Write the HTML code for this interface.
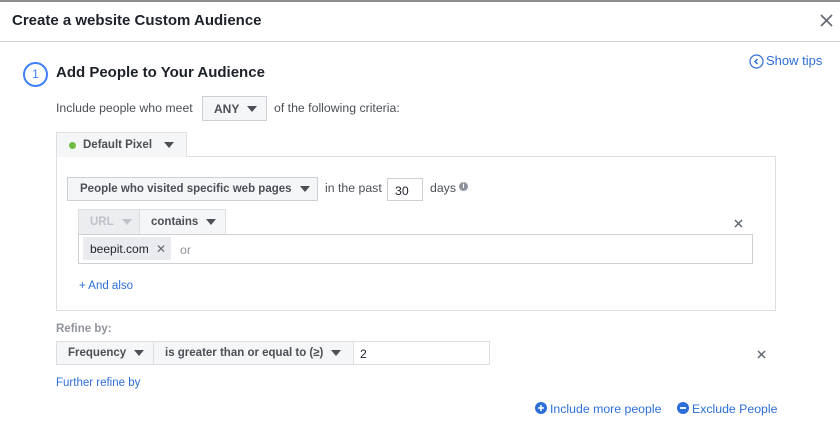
<!DOCTYPE html>
<html><head><style>
*{margin:0;padding:0;box-sizing:border-box}
body{width:840px;height:428px;background:#fff;font-family:"Liberation Sans",sans-serif;color:#1d2129;position:relative;overflow:hidden;font-size:12.3px}
.a{position:absolute;white-space:nowrap}
.btn{position:absolute;background:#f5f6f7;border:1px solid #ccd0d5;font-weight:bold;color:#4b4f56;font-size:11.5px;display:flex;align-items:center}
.tri{display:inline-block;width:0;height:0;border-left:5px solid transparent;border-right:5px solid transparent;border-top:6px solid #4b4f56;margin-left:8px}
.blue{color:#2d6fd8}
</style></head><body>
<div class="a" style="left:0;top:0;width:840px;height:2px;background:#8d8d8d"></div>
<div class="a" style="left:12px;top:12px;font-size:15px;font-weight:bold">Create a website Custom Audience</div>
<svg class="a" style="left:820px;top:14px" width="13" height="13"><path d="M1 1L12 12M12 1L1 12" stroke="#606770" stroke-width="1.6"/></svg>
<div class="a" style="left:0;top:41px;width:840px;height:1px;background:#d3d5d8"></div>

<div class="a" style="left:23px;top:62px;width:25px;height:25px;border:2px solid #4080ff;border-radius:50%;color:#4080ff;font-size:12px;text-align:center;line-height:21px">1</div>
<div class="a" style="left:56px;top:64px;font-size:15px;font-weight:bold">Add People to Your Audience</div>
<svg class="a" style="left:749px;top:54px" width="15" height="15"><circle cx="7.5" cy="7.5" r="6.5" fill="none" stroke="#2d6fd8" stroke-width="1.2"/><path d="M8.5 5L6 7.5L8.5 10" fill="none" stroke="#2d6fd8" stroke-width="1.5"/></svg>
<div class="a blue" style="left:766px;top:53px;font-size:13px">Show tips</div>

<div class="a" style="left:56px;top:101px;color:#4b4f56">Include people who meet</div>
<div class="btn" style="left:202px;top:96px;width:65px;height:25px;padding-left:11px;font-size:12px">ANY<span class="tri"></span></div>
<div class="a" style="left:274px;top:101px;color:#4b4f56">of the following criteria:</div>

<div class="a" style="left:56px;top:156px;width:720px;height:155px;border:1px solid #dddfe2"></div>
<div class="btn" style="left:56px;top:132px;width:131px;height:25px;padding-left:12px;border-bottom:none;border-color:#dddfe2"><span style="width:7px;height:7px;border-radius:50%;background:#6fbe44;margin-right:7px"></span>Default Pixel<span class="tri" style="margin-left:12px"></span></div>

<div class="btn" style="left:67px;top:177px;width:251px;height:24px;padding-left:12px">People who visited specific web pages<span class="tri"></span></div>
<div class="a" style="left:325px;top:181px;color:#4b4f56">in the past</div>
<div class="a" style="left:387px;top:178px;width:36px;height:23px;border:1px solid #ccd0d5;padding:5px 7px">30</div>
<div class="a" style="left:430px;top:181px;color:#4b4f56">days</div>
<div class="a" style="left:459px;top:182px;width:9px;height:9px;border-radius:50%;background:#8d949e;color:#fff;font-size:7px;text-align:center;line-height:9px;font-weight:bold">i</div>

<div class="btn" style="left:78px;top:209px;width:62px;height:26px;padding-left:11px;background:#ebedf0;color:#bec3c9;border-color:#dddfe2">URL<span class="tri" style="border-top-color:#bec3c9"></span></div>
<div class="btn" style="left:139px;top:209px;width:87px;height:26px;padding-left:11px;border-color:#dddfe2">contains<span class="tri"></span></div>
<div class="a" style="left:78px;top:234px;width:675px;height:30px;border:1px solid #ccd0d5"></div>
<div class="a" style="left:83px;top:237px;width:88px;height:23px;background:#e9ebee;padding:5px 7px;font-size:12px">beepit.com <span style="color:#606770;margin-left:4px">✕</span></div>
<div class="a" style="left:180px;top:243px;color:#90949c">or</div>
<svg class="a" style="left:734px;top:219px" width="9" height="9"><path d="M1 1L8 8M8 1L1 8" stroke="#606770" stroke-width="1.5"/></svg>
<div class="a blue" style="left:79px;top:280px;font-size:11.5px">+ And also</div>

<div class="a" style="left:56px;top:323px;color:#90949c;font-weight:bold;font-size:11.5px">Refine by:</div>
<div class="btn" style="left:56px;top:341px;width:98px;height:24px;padding-left:11px;border-color:#dddfe2">Frequency<span class="tri"></span></div>
<div class="btn" style="left:153px;top:341px;width:201px;height:24px;padding-left:11px;border-color:#dddfe2">is greater than or equal to (≥)<span class="tri"></span></div>
<div class="a" style="left:353px;top:341px;width:137px;height:24px;border:1px solid #dddfe2;padding:5px 6px">2</div>
<svg class="a" style="left:757px;top:350px" width="9" height="9"><path d="M1 1L8 8M8 1L1 8" stroke="#606770" stroke-width="1.5"/></svg>
<div class="a blue" style="left:56px;top:377px;font-size:11.5px">Further refine by</div>

<svg class="a" style="left:535px;top:402px" width="12" height="12"><circle cx="6" cy="6" r="6" fill="#2d6fd8"/><path d="M6 3V9M3 6H9" stroke="#fff" stroke-width="1.6"/></svg>
<div class="a blue" style="left:550px;top:402px">Include more people</div>
<svg class="a" style="left:677px;top:402px" width="12" height="12"><circle cx="6" cy="6" r="6" fill="#2d6fd8"/><path d="M3 6H9" stroke="#fff" stroke-width="1.8"/></svg>
<div class="a blue" style="left:692px;top:402px">Exclude People</div>
</body></html>
